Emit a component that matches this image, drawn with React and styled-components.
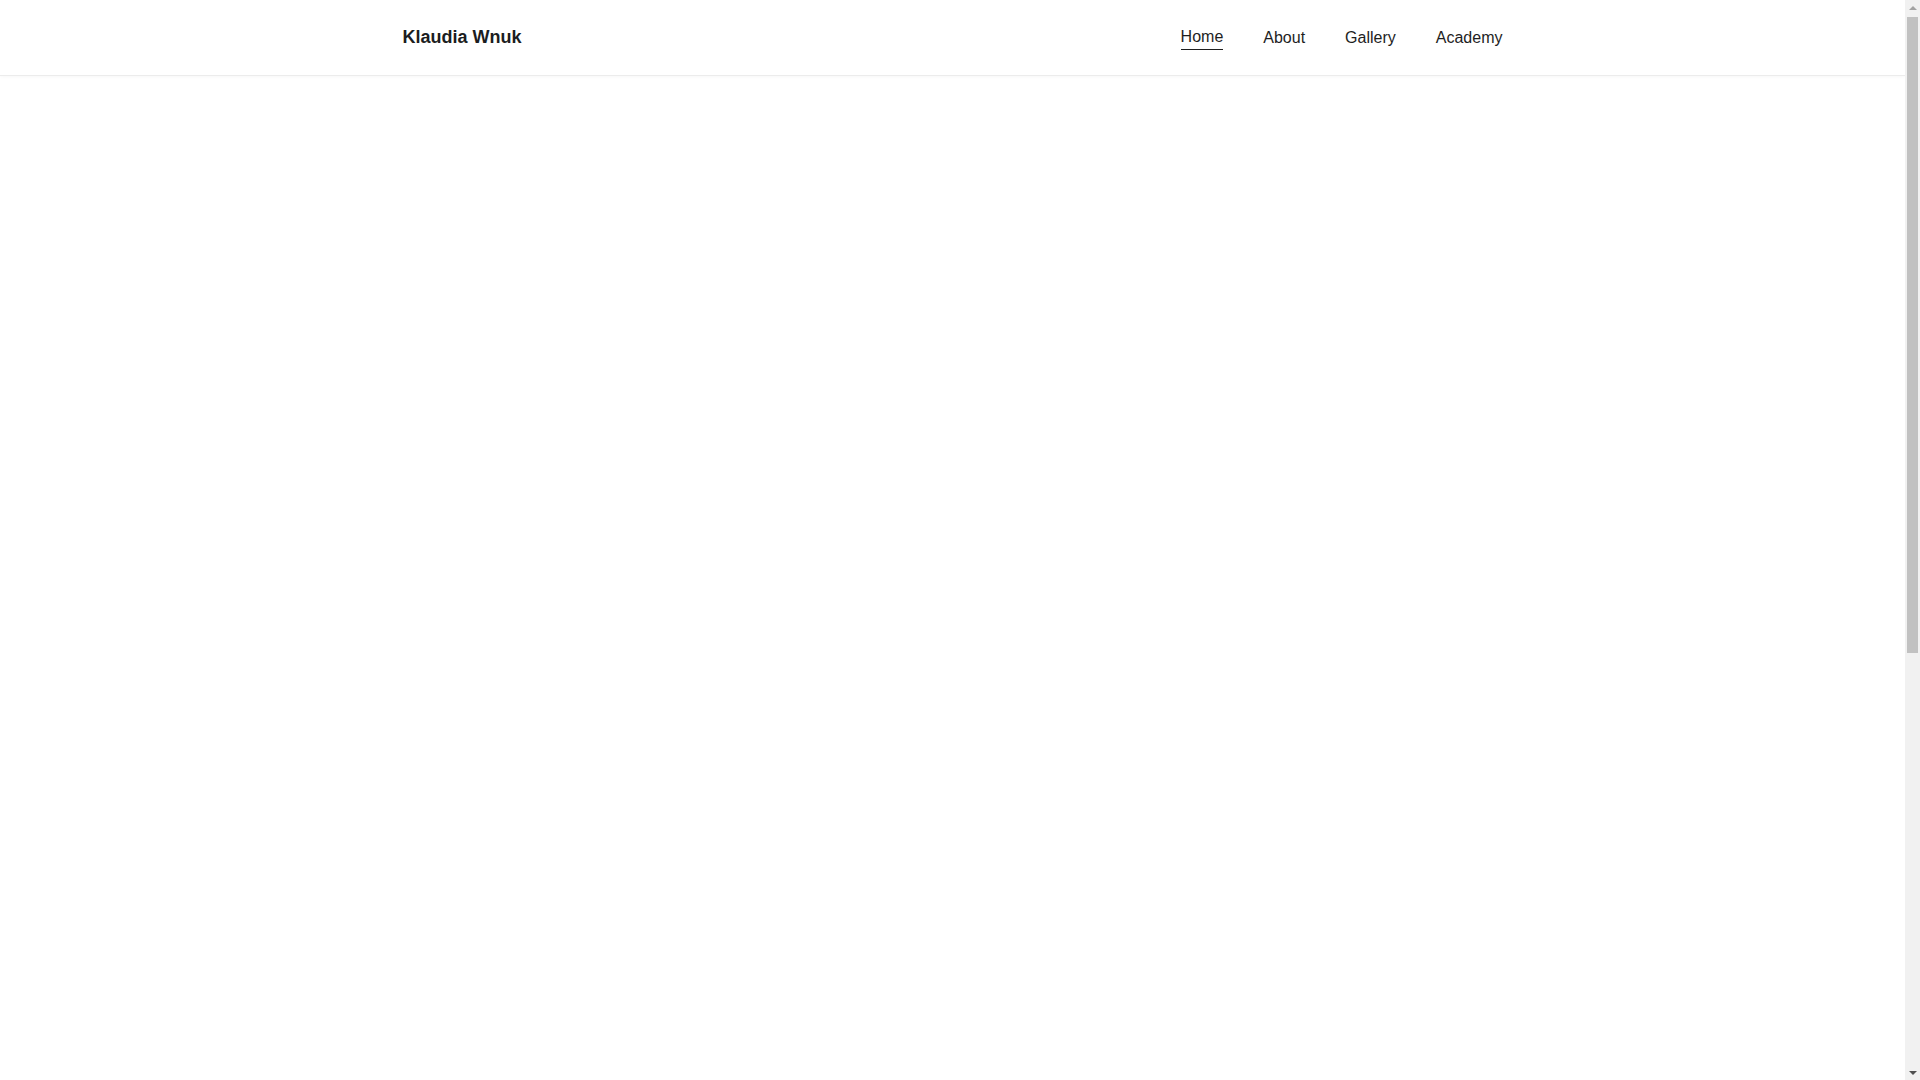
import React from "react";
import styled, { createGlobalStyle } from "styled-components";

const GlobalStyle = createGlobalStyle`
	html, body {
		margin: 0;
		padding: 0;
		background: #fff;
	}
	body {
		font-family: "Liberation Sans", Arial, sans-serif;
		color: #1b1d21;
		padding-right: 15px;
	}
	* {
		box-sizing: border-box;
	}
`;

const links = ["Home", "About", "Gallery", "Academy"];

const App = () => {
	return (
		<>
			<GlobalStyle />
			<Header>
				<Container>
					<Logo href="#">Klaudia Wnuk</Logo>
					<Nav>
						{links.map((link, i) => (
							<NavLink key={link} href="#" $active={i === 0}>
								{link}
							</NavLink>
						))}
					</Nav>
				</Container>
			</Header>
			<Main />
			<ScrollBar aria-hidden="true">
				<ArrowButton>
					<Arrow $dir="up" />
				</ArrowButton>
				<Track>
					<Thumb />
				</Track>
				<ArrowButton>
					<Arrow $dir="down" />
				</ArrowButton>
			</ScrollBar>
		</>
	);
};

export default App;

const Header = styled.header`
	height: 76px;
	border-bottom: 1px solid #ececec;
	box-shadow: 0 1px 3px rgba(0, 0, 0, 0.03);
	background: #fff;
`;

const Container = styled.div`
	max-width: 1100px;
	height: 100%;
	margin: 0 auto;
	display: flex;
	align-items: center;
	justify-content: space-between;
`;

const Logo = styled.a`
	font-size: 18px;
	font-weight: 700;
	color: #1b1d21;
	text-decoration: none;
`;

const Nav = styled.nav`
	display: flex;
	align-items: center;
	gap: 40px;
`;

const NavLink = styled.a`
	font-size: 16px;
	color: #1e1e1e;
	text-decoration: none;
	${(p) =>
		p.$active &&
		`
		padding-bottom: 3px;
		margin-top: 2.5px;
		border-bottom: 1.5px solid #1e1e1e;
	`}
`;

const Main = styled.main`
	min-height: 1710px;
`;

// stand-in for the classic browser scrollbar seen in the shot
const ScrollBar = styled.div`
	position: fixed;
	top: 0;
	right: 0;
	width: 15px;
	height: 100vh;
	background: #f1f1f1;
	display: flex;
	flex-direction: column;
`;

const ArrowButton = styled.div`
	height: 15px;
	flex: none;
	display: flex;
	align-items: center;
	justify-content: center;
`;

const Arrow = styled.span`
	width: 0;
	height: 0;
	border-left: 4px solid transparent;
	border-right: 4px solid transparent;
	${(p) =>
		p.$dir === "up"
			? "border-bottom: 4px solid #a3a3a3;"
			: "border-top: 4px solid #505050;"}
`;

const Track = styled.div`
	flex: 1;
	padding: 2px 2px 0;
`;

const Thumb = styled.div`
	height: 636px;
	background: #c1c1c1;
`;
